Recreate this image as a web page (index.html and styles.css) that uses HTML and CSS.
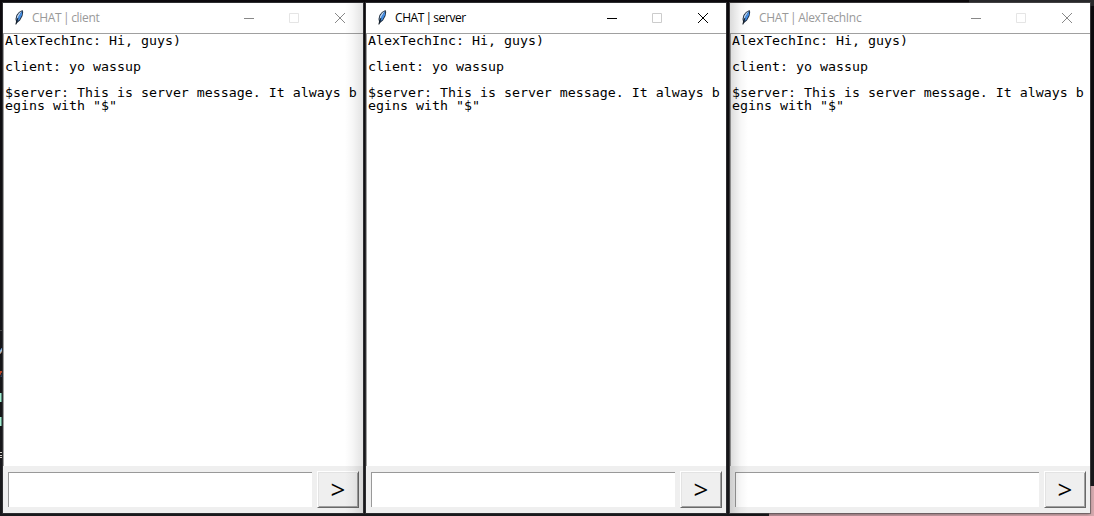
FILE: index.html
```
<!DOCTYPE html>
<html lang="en">
<head>
<meta charset="utf-8">
<title>CHAT</title>
<link rel="stylesheet" href="styles.css">
</head>
<body>
<svg width="0" height="0" class="defs" aria-hidden="true">
  <symbol id="feather" viewBox="0 0 12 17">
    <path d="M9.5 1 L6 3 L3.5 6 L2.5 10 L3 12.5 L2.5 15.5 L4 14 L7 11.5 L9.5 7 L10.2 3 Z" fill="#1b2b3e"/>
    <path d="M8.8 2 L6 4 L4.1 7 L3.4 11 L5.7 7.8 Z" fill="#bcd5f2"/>
    <path d="M9.2 2 L9 6 L6.6 10.5 L4.2 12.4 L5.3 7.8 Z" fill="#438de4"/>
    <path d="M5 9 L3 15.5" fill="none" stroke="#111820" stroke-width=".8"/>
  </symbol>
</svg>
<div class="desktop">
  <div class="code-edge">
    <i class="bit divider"></i><i class="bit blue"></i><i class="bit red"></i><i class="bit mint"></i><i class="bit mint second"></i><i class="bit pale"></i>
  </div>
  <i class="topbar"></i><i class="wallpaper"></i>

  <section class="window inactive shade-right">
    <header class="titlebar">
      <svg class="feather"><use href="#feather"/></svg>
      <span class="title client">CHAT | client</span>
      <svg class="controls" width="104" height="14" viewBox="0 0 104 14"><path class="min" d="M2 7.5h10"/><path class="max" d="M47.5 2.5h9v9h-9z"/><path class="close" d="M93 2l10 10M103 2l-10 10"/></svg>
    </header>
    <div class="log"><pre>AlexTechInc: Hi, guys)

client: yo wassup

$server: This is server message. It always b
egins with "$"</pre></div>
    <footer class="entry"><div class="field"></div><button class="send">&gt;</button></footer>
  </section>

  <section class="window active">
    <header class="titlebar">
      <svg class="feather"><use href="#feather"/></svg>
      <span class="title server">CHAT | server</span>
      <svg class="controls" width="104" height="14" viewBox="0 0 104 14"><path class="min" d="M2 7.5h10"/><path class="max" d="M47.5 2.5h9v9h-9z"/><path class="close" d="M93 2l10 10M103 2l-10 10"/></svg>
    </header>
    <div class="log"><pre>AlexTechInc: Hi, guys)

client: yo wassup

$server: This is server message. It always b
egins with "$"</pre></div>
    <footer class="entry"><div class="field"></div><button class="send">&gt;</button></footer>
  </section>

  <section class="window inactive shade-left last">
    <header class="titlebar">
      <svg class="feather"><use href="#feather"/></svg>
      <span class="title alex">CHAT | AlexTechInc</span>
      <svg class="controls" width="104" height="14" viewBox="0 0 104 14"><path class="min" d="M2 7.5h10"/><path class="max" d="M47.5 2.5h9v9h-9z"/><path class="close" d="M93 2l10 10M103 2l-10 10"/></svg>
    </header>
    <div class="log"><pre>AlexTechInc: Hi, guys)

client: yo wassup

$server: This is server message. It always b
egins with "$"</pre></div>
    <footer class="entry"><div class="field"></div><button class="send">&gt;</button></footer>
  </section>
</div>
</body>
</html>
```
FILE: styles.css
```
* { box-sizing: border-box; }
body { margin: 0; overflow: hidden; }
.defs { position: absolute; }
.desktop {
  position: relative;
  display: flex;
  gap: 3px;
  width: 1094px;
  height: 516px;
  padding: 3px 4px 3px 3px;
  background: linear-gradient(#0c0a0d, #151518 70%, #19191c);
}
/* Desktop content visible around the windows */
.code-edge { position: absolute; left: 0; top: 0; width: 3px; height: 516px; overflow: hidden; }
.bit { position: absolute; left: 0; width: 2px; height: 9px; }
.divider { top: 330px; height: 1px; width: 3px; background: #444; }
.blue { top: 345px; height: 9px; width: 3px; background: linear-gradient(125deg, #15151a 35%, #699bd8 45%, #b7c9c8 60%, #6b3b27 75%, #15151a 80%); }
.red { top: 371px; height: 6px; width: 3px; background: linear-gradient(120deg, #b64225 35%, #191b24 45%, #4b689c); }
.mint { top: 393px; background: #a6ecd0; border-right: 1px solid #55897a; }
.mint.second { top: 417px; }
.pale { top: 452px; height: 6px; width: 3px; background: repeating-linear-gradient(#d5d0cb 0 1px, #1b1b1e 1px 2.5px); }
.topbar { position: absolute; left: 969px; right: 0; top: 0; height: 6px; background: #29292b; }
.wallpaper { position: absolute; left: 769px; right: 0; bottom: 0; height: 30px; background: linear-gradient(90deg, #b48e95, #d5a9ae); }

.window {
  position: relative;
  display: flex;
  flex-direction: column;
  width: 360px;
  height: 510px;
  flex: none;
  background: #fff;
  box-shadow: 0 0 0 1px #2d2d30;
}
.window.last { margin-left: 1px; box-shadow: 0 0 0 1px #55535599, 0 1px 3px #0006; }
.titlebar { display: flex; align-items: center; height: 30px; padding: 0 17px 1px 10px; color: #000; }
.feather { width: 12px; height: 17px; flex: none; }
.title {
  flex: 1;
  margin-left: 7px;
  font: 12px/18px "Open Sans", sans-serif;
  letter-spacing: -.3px;
  word-spacing: -1.1px;
  white-space: nowrap;
}
.title.server { letter-spacing: -.42px; }
.inactive .title { color: #999; }
.controls { flex: none; fill: none; stroke: #000; }
.controls path { stroke-width: 1; }
.controls .max { stroke: #ccc; }
.inactive .controls { stroke: #888; }
.inactive .controls .max { stroke: #e5e5e5; }
.log { height: 433px; overflow: hidden; border-top: 1px solid #a0a0a0; border-left: 1px solid #a0a0a0; }
pre {
  width: 340px;
  margin: 1px 0 0 1px;
  color: #000;
  font: 12.2px/13px "DejaVu Sans Mono", monospace;
  transform: scaleX(1.0895);
  transform-origin: 0 0;
}
.entry { display: flex; gap: 5px; height: 47px; padding: 6px 4px 6px 5px; background: #efefef; }
.field { width: 304px; height: 35px; background: #fff; border-left: 1px solid #999; border-top: 1px solid #999; }
.send {
  width: 42px;
  height: 37px;
  margin-top: -1px;
  padding: 0;
  color: #000;
  font: 26px/35px "Open Sans", sans-serif;
  text-align: center;
  background: #efefef;
  border: 1px solid;
  border-color: #fff #696969 #696969 #fff;
  box-shadow: inset 1px 1px #e3e3e3, inset -1px -1px #a0a0a0;
}
.shade-right::after, .shade-left::after {
  content: "";
  position: absolute;
  top: 0;
  bottom: 0;
  right: 0;
  width: 18px;
  background: linear-gradient(90deg, #0000, #00000008 40%, #0000001c);
}
.shade-left::after { left: 0; right: auto; background: linear-gradient(270deg, #0000, #00000008 40%, #00000024); }
```
